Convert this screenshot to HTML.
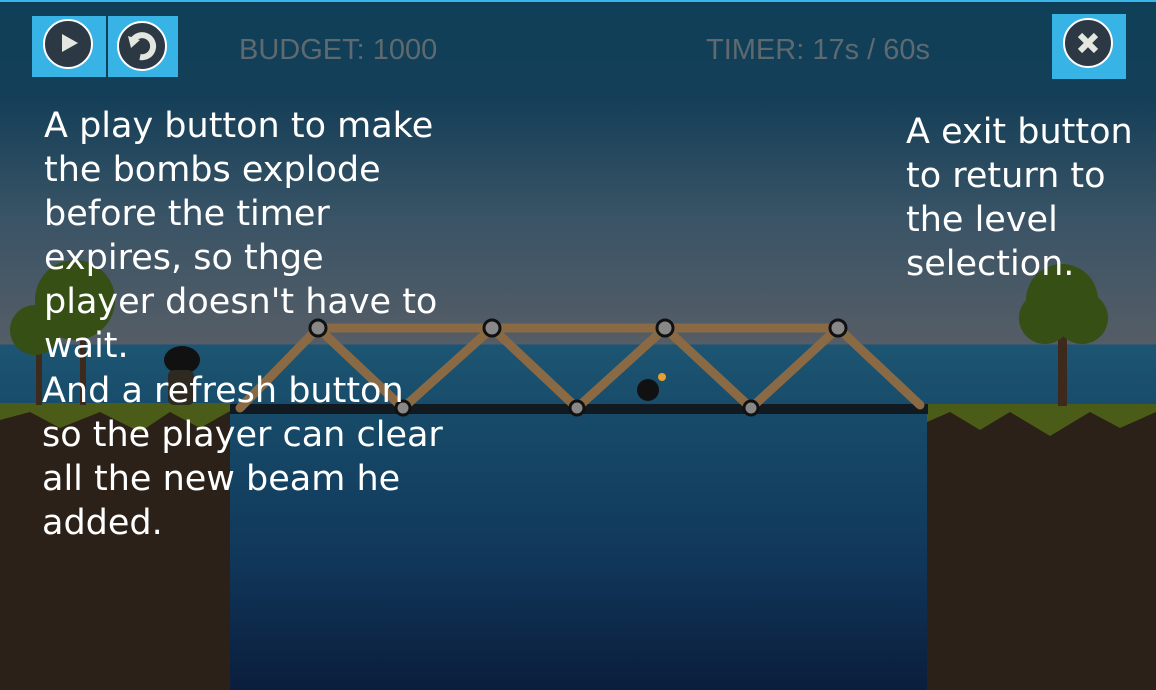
<!DOCTYPE html>
<html><head><style>
body{margin:0;width:1156px;height:690px;overflow:hidden;position:relative;font-family:"DejaVu Sans",sans-serif;
background:linear-gradient(#0f3f58 0px,#153f58 100px,#3a5466 220px,#555d66 344px,#1c5573 345px,#174a68 420px,#10375a 560px,#0b1d3c 690px);}
.btn{position:absolute;background:#38b3e6;}
.t{position:absolute;color:#fff;font-size:35px;line-height:44px;white-space:pre;}
.hud{position:absolute;top:34px;font-family:"Liberation Sans",sans-serif;font-size:29px;color:#5e6a6f;}
</style></head><body>
<div style="position:absolute;left:0;top:0;width:1156px;height:2px;background:#3ab5e8"></div>
<div class="btn" style="left:32px;top:16px;width:74px;height:61px"></div>
<div class="btn" style="left:108px;top:16px;width:70px;height:61px"></div>
<div class="btn" style="left:1052px;top:14px;width:74px;height:65px"></div>
<svg style="position:absolute;left:0;top:0" width="1156" height="690">
<g stroke="#fff" stroke-width="2" fill="#2c3945">
<circle cx="68" cy="44" r="24"/><circle cx="142" cy="46" r="24"/><circle cx="1088" cy="43" r="24"/></g>
<path d="M62 34 L78 43 L62 52Z" fill="#e4e6e0"/>
<path d="M133 40 A11 11 0 1 1 140 57" stroke="#e4e6e0" stroke-width="6" fill="none"/>
<path d="M128 36 L140 40 L131 48Z" fill="#e4e6e0"/>
<path d="M1080 35 L1096 51 M1096 35 L1080 51" stroke="#e4e6e0" stroke-width="6"/>
<!-- cliffs -->
<rect x="0" y="405" width="230" height="285" fill="#2b2119"/>
<rect x="927" y="405" width="229" height="285" fill="#2b2119"/>
<path d="M0 403 H232 V410 L200 428 L170 412 L140 432 L100 412 L60 428 L30 412 L0 420Z" fill="#4a5c17"/>
<path d="M927 404 H1156 V412 L1120 428 L1090 412 L1050 436 L1010 412 L980 430 L950 412 L927 422Z" fill="#4a5c17"/>
<!-- trees -->
<rect x="1058" y="330" width="9" height="76" fill="#3e2a1c"/>
<circle cx="1062" cy="300" r="36" fill="#364f14"/><circle cx="1045" cy="318" r="26" fill="#364f14"/><circle cx="1082" cy="318" r="26" fill="#364f14"/>
<rect x="36" y="350" width="6" height="55" fill="#3e2a1c"/><rect x="80" y="340" width="6" height="65" fill="#3e2a1c"/>
<circle cx="35" cy="330" r="25" fill="#364f14"/><circle cx="75" cy="300" r="40" fill="#364f14"/>
<!-- ninja -->
<ellipse cx="182" cy="360" rx="18" ry="14" fill="#111"/><rect x="168" y="370" width="26" height="35" rx="6" fill="#2e2a22"/>
<!-- bridge -->
<rect x="230" y="404" width="698" height="10" fill="#111a20"/>
<g stroke="#8a6a44" stroke-width="9" stroke-linecap="round" fill="none">
<path d="M318 328 H838"/>
<path d="M240 408 L318 328 L403 408 L492 328 L577 408 L665 328 L751 408 L838 328 L920 405"/></g>
<g fill="#888" stroke="#111" stroke-width="3">
<circle cx="318" cy="328" r="8"/><circle cx="492" cy="328" r="8"/><circle cx="665" cy="328" r="8"/><circle cx="838" cy="328" r="8"/>
<circle cx="403" cy="408" r="7"/><circle cx="577" cy="408" r="7"/><circle cx="751" cy="408" r="7"/></g>
<circle cx="648" cy="390" r="11" fill="#111"/><circle cx="662" cy="377" r="4" fill="#e8a030"/>
</svg>
<div class="hud" style="left:239px">BUDGET: 1000</div>
<div class="hud" style="left:706px">TIMER: 17s / 60s</div>
<div class="t" style="left:44px;top:104px">A play button to make
the bombs explode
before the timer
expires, so thge
player doesn't have to
wait.</div>
<div class="t" style="left:42px;top:369px">And a refresh button
so the player can clear
all the new beam he
added.</div>
<div class="t" style="left:906px;top:110px">A exit button
to return to
the level
selection.</div>
</body></html>
